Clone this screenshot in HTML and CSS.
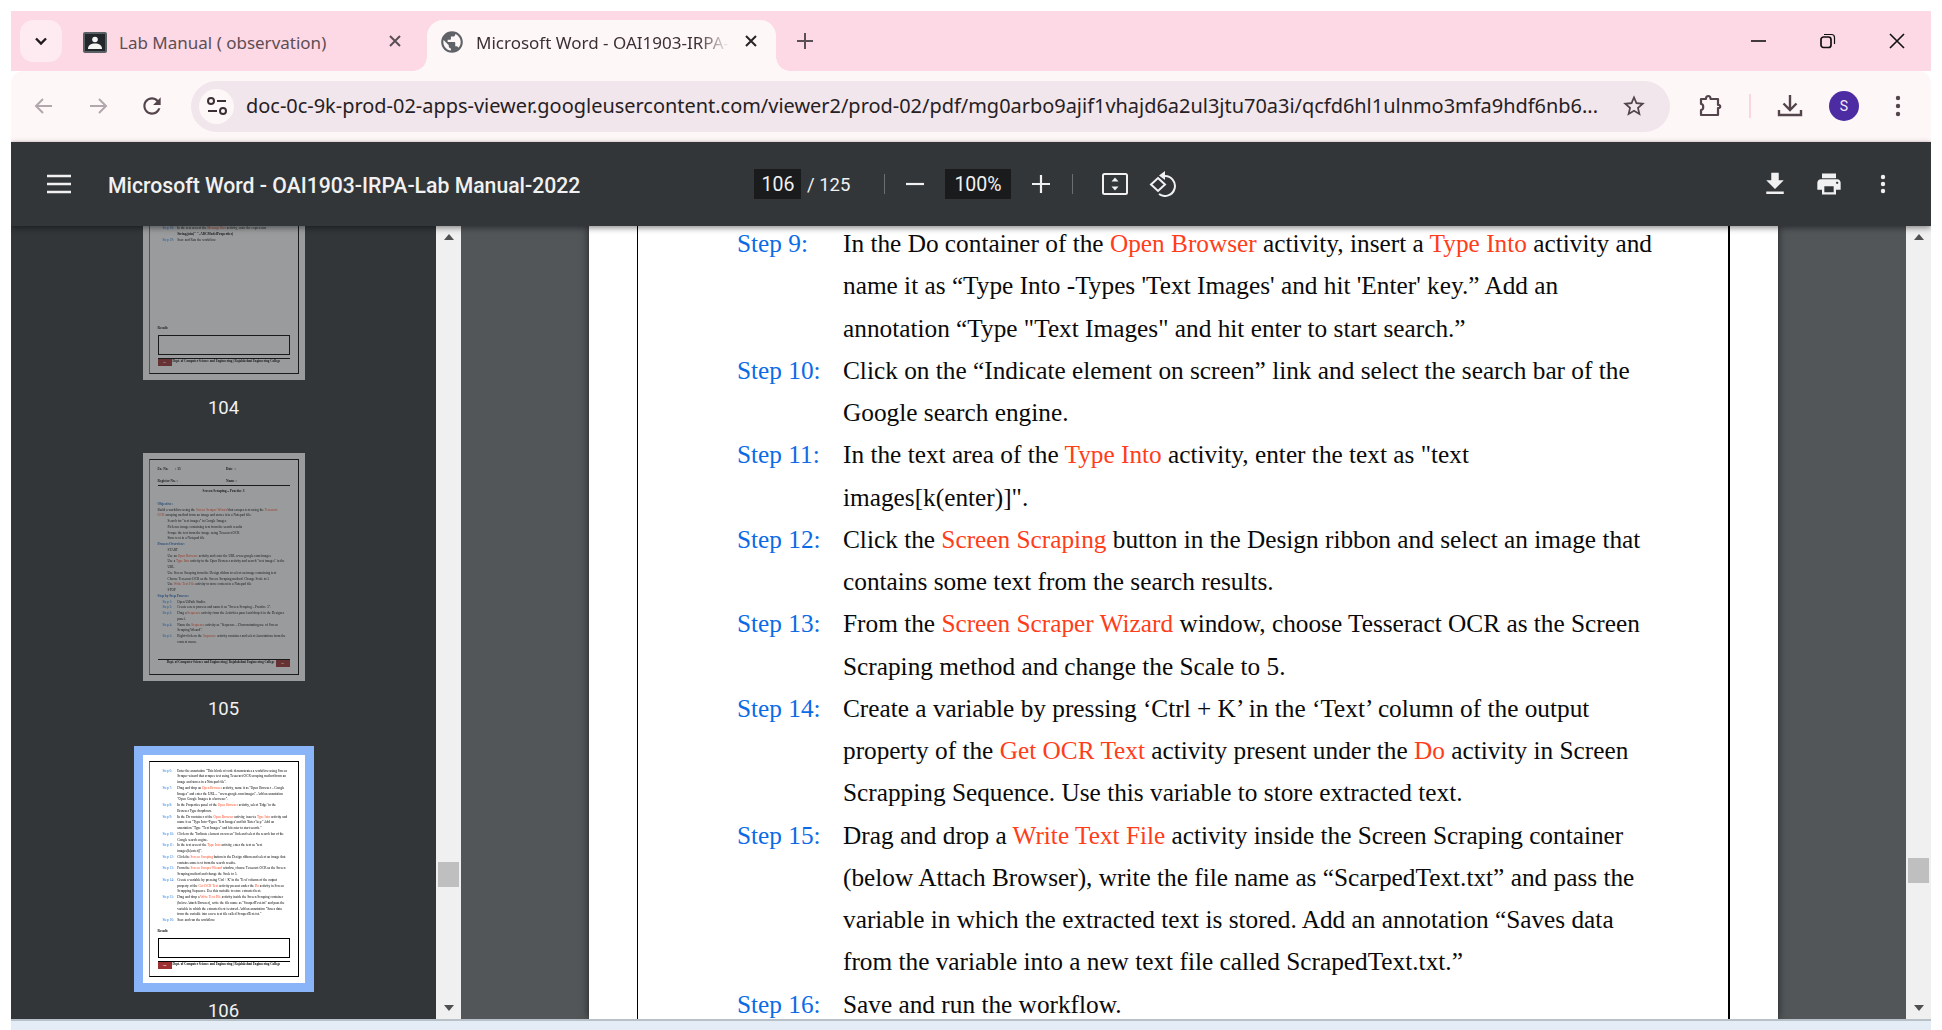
FILE: index.html
```html
<!DOCTYPE html>
<html lang="en">
<head>
<meta charset="utf-8">
<title>Microsoft Word - OAI1903-IRPA-Lab Manual-2022</title>
<link rel="stylesheet" href="styles.css">
</head>
<body>
<div class="window">
  <div class="tabstrip">
    <div class="tabmenu"><svg width="16" height="16" viewBox="0 0 16 16"><path d="M3 5.5l5 5 5-5" fill="none" stroke="#1f1a1d" stroke-width="2.4"/></svg></div>
    <div class="tab">
      <svg class="tabicon" width="24" height="21" viewBox="0 0 24 21"><rect width="24" height="21" rx="2" fill="#5a5f64"/><rect x="2" y="2" width="20" height="17" fill="#23262a"/><circle cx="12" cy="7.5" r="2.8" fill="#f5f5f5"/><path d="M5 17c0-4 3-5.500 7-5.500s7 1.500 7 5.500z" fill="#f5f5f5"/></svg>
      <span class="tabtitle">Lab Manual ( observation)</span>
      <svg class="tabclose dim" width="16" height="16" viewBox="0 0 16 16"><path d="M3 3l10 10M13 3L3 13" stroke="#5a4f55" stroke-width="2"/></svg>
    </div>
    <div class="tab active">
      <svg class="globe" width="26" height="26" viewBox="0 0 24 24"><path fill="#5f6368" d="M12 2C6.480 2 2 6.480 2 12s4.480 10 10 10 10-4.480 10-10S17.520 2 12 2zm-1 17.930c-3.950-.49-7-3.850-7-7.930 0-.62.08-1.210.21-1.790L9 15v1c0 1.100.9 2 2 2v1.930zm6.900-2.540c-.26-.81-1-1.390-1.900-1.390h-1v-3c0-.55-.45-1-1-1H8v-2h2c.55 0 1-.45 1-1V7h2c1.100 0 2-.9 2-2v-.41c2.930 1.190 5 4.060 5 7.410 0 2.080-.8 3.970-2.100 5.390z"/></svg>
      <span class="tabtitle fade">Microsoft Word - OAI1903-IRPA-Lab Manual-2022</span>
      <svg class="tabclose" width="16" height="16" viewBox="0 0 16 16"><path d="M3 3l10 10M13 3L3 13" stroke="#2a2327" stroke-width="2"/></svg>
    </div>
    <svg class="newtab" width="18" height="18" viewBox="0 0 18 18"><path d="M9 1v16M1 9h16" stroke="#5a4f55" stroke-width="2"/></svg>
    <div class="winctl">
      <div class="winbtn"><svg width="16" height="16" viewBox="0 0 16 16"><path d="M0 8h15" stroke="#111" stroke-width="1.600"/></svg></div>
      <div class="winbtn"><svg width="16" height="16" viewBox="0 0 16 16"><rect x="1" y="4" width="10" height="10.500" rx="2.500" fill="none" stroke="#111" stroke-width="1.700"/><path d="M4 1.500h7.500a3 3 0 0 1 3 3V11" fill="none" stroke="#111" stroke-width="1.200"/></svg></div>
      <div class="winbtn"><svg width="16" height="16" viewBox="0 0 16 16"><path d="M1 1l14 14M15 1L1 15" stroke="#111" stroke-width="1.600"/></svg></div>
    </div>
  </div>

  <div class="toolbar">
    <div class="slot"><svg width="22" height="22" viewBox="0 0 22 22"><path d="M19 11H3M10 4l-7 7 7 7" fill="none" stroke="#b0a8ac" stroke-width="2"/></svg></div>
    <div class="slot"><svg width="22" height="22" viewBox="0 0 22 22"><path d="M3 11h16M12 4l7 7-7 7" fill="none" stroke="#b0a8ac" stroke-width="2"/></svg></div>
    <div class="slot"><svg width="26" height="26" viewBox="0 0 24 24"><path fill="#54444c" d="M17.650 6.350C16.200 4.900 14.210 4 12 4c-4.420 0-7.990 3.580-7.990 8s3.570 8 7.990 8c3.730 0 6.840-2.550 7.730-6h-2.080c-.82 2.330-3.040 4-5.650 4-3.310 0-6-2.690-6-6s2.690-6 6-6c1.660 0 3.140.69 4.220 1.780L13 11h7V4l-2.350 2.350z"/></svg></div>
    <div class="address">
      <div class="tune"><svg width="22" height="22" viewBox="0 0 22 22"><circle cx="5" cy="6" r="3" fill="none" stroke="#3c3034" stroke-width="2"/><path d="M11 6h9M2 16h9" stroke="#3c3034" stroke-width="2"/><circle cx="17" cy="16" r="3" fill="none" stroke="#3c3034" stroke-width="2"/></svg></div>
      <span class="url">doc-0c-9k-prod-02-apps-viewer.googleusercontent.com/viewer2/prod-02/pdf/mg0arbo9ajif1vhajd6a2ul3jtu70a3i/qcfd6hl1ulnmo3mfa9hdf6nb6...</span>
      <svg class="star" width="26" height="26" viewBox="0 0 24 24"><path fill="#54444c" d="M22 9.240l-7.190-.62L12 2 9.190 8.630 2 9.240l5.460 4.730L5.820 21 12 17.270 18.180 21l-1.630-7.030L22 9.240zM12 15.400l-3.760 2.270 1-4.280-3.320-2.880 4.380-.38L12 6.100l1.710 4.040 4.380.38-3.320 2.880 1 4.280L12 15.400z"/></svg>
    </div>
    <div class="slot ext"><svg width="26" height="26" viewBox="0 0 26 26"><path d="M4 6h5c-.5-4 5-4 4.500 0H21v6c3-.5 3 3.500 0 3v7H4v-5c3 0 3-6 0-6z" fill="none" stroke="#54444c" stroke-width="2.200" stroke-linejoin="round"/></svg></div>
    <div class="tsep"></div>
    <div class="slot"><svg width="26" height="26" viewBox="0 0 26 26"><path d="M13 2v15M6.500 10.500L13 17l6.500-6.500M2 17v5h22v-5" fill="none" stroke="#54444c" stroke-width="2.400"/></svg></div>
    <div class="slot"><div class="avatar">S</div></div>
    <div class="slot"><svg width="8" height="24" viewBox="0 0 8 24"><circle cx="4" cy="4" r="2.200" fill="#54444c"/><circle cx="4" cy="12" r="2.200" fill="#54444c"/><circle cx="4" cy="20" r="2.200" fill="#54444c"/></svg></div>
  </div>

  <div class="viewerbar">
    <svg class="burger" width="24" height="20" viewBox="0 0 24 20"><path d="M0 2h24M0 10h24M0 18h24" stroke="#f1f1f1" stroke-width="2.600"/></svg>
    <div class="doctitle">Microsoft Word - OAI1903-IRPA-Lab Manual-2022</div>
    <div class="pgbox">106</div>
    <div class="pgtotal">/ 125</div>
    <div class="vsep"></div>
    <div class="vslot sp-minus"><svg width="18" height="18" viewBox="0 0 18 18"><path d="M0 9h18" stroke="#f1f1f1" stroke-width="2.200"/></svg></div>
    <div class="zoombox">100%</div>
    <div class="vslot sp-plus"><svg width="18" height="18" viewBox="0 0 18 18"><path d="M0 9h18M9 0v18" stroke="#f1f1f1" stroke-width="2.200"/></svg></div>
    <div class="vsep sp-sep2"></div>
    <svg class="fit" width="26" height="22" viewBox="0 0 26 22"><rect x="1" y="1" width="24" height="20" rx="1.500" fill="none" stroke="#f1f1f1" stroke-width="2"/><path d="M13 4.500l3.500 4h-7zM13 17.500l3.500-4h-7z" fill="#f1f1f1"/></svg>
    <svg class="rotate" width="28" height="26" viewBox="0 0 28 26"><path d="M9 7l7 6.500-7 6.500-7-6.500z" fill="none" stroke="#f1f1f1" stroke-width="2"/><path d="M12 5h3a10 10 0 1 1-5 18" fill="none" stroke="#f1f1f1" stroke-width="2"/><path d="M16 0v9l-6-4.500z" fill="#f1f1f1"/></svg>
    <div class="vright">
      <div class="vslot2"><svg width="30" height="30" viewBox="0 0 24 24"><path fill="#f1f1f1" d="M19 9h-4V3H9v6H5l7 7 7-7zM5 18v2h14v-2H5z"/></svg></div>
      <div class="vslot2"><svg width="28" height="28" viewBox="0 0 24 24"><path fill="#f1f1f1" d="M19 8H5c-1.660 0-3 1.340-3 3v6h4v4h12v-4h4v-6c0-1.660-1.340-3-3-3zm-3 11H8v-5h8v5zm3-7c-.55 0-1-.45-1-1s.45-1 1-1 1 .45 1 1-.45 1-1 1zm-1-9H6v4h12V3z"/></svg></div>
      <div class="vslot2"><svg width="8" height="22" viewBox="0 0 8 22"><circle cx="4" cy="4" r="2.200" fill="#f1f1f1"/><circle cx="4" cy="11" r="2.200" fill="#f1f1f1"/><circle cx="4" cy="18" r="2.200" fill="#f1f1f1"/></svg></div>
    </div>
  </div>

  <div class="content">
    <aside class="sidebar">
      <div class="thumb dimmed">
        <div class="frame">
          <div class="skip"></div>
          <div class="tl"><span class="tn">Step 18:</span>In the text area of the <i class="tr">Message Box</i> activity, enter the expression</div>
          <div class="tl tc"><b>String.join(" ", ABCModelProperties)</b></div>
          <div class="tl"><span class="tn">Step 19:</span>Save and Run the workflow.</div>
          <div class="bottom">
            <div class="tl tb">Result:</div>
            <div class="resultbox"></div>
            <div class="foot"><span class="redbox">104</span><span class="foottext">Dept. of Computer Science and Engineering | Rajalakshmi Engineering College</span></div>
          </div>
        </div>
      </div>
      <div class="plabel">104</div>
      <div class="thumb dimmed">
        <div class="frame">
          <div class="tl tb top"><span class="col">Ex. No.&nbsp;&nbsp;&nbsp;&nbsp;&nbsp;&nbsp;&nbsp;&nbsp;: 15</span>Date&nbsp;&nbsp;:</div>
          <div class="tl"></div>
          <div class="tl tb rule"><span class="col">Register No. :</span>Name :</div>
          <div class="tl tb center">Screen Scraping – Practice 3</div>
          <div class="tl gap"></div>
          <div class="tl tb th">Objective:</div>
          <div class="tl">Build a workflow using the <i class="tr">Screen Scraper Wizard</i> that scrapes text using the <i class="tr">Tesseract</i></div>
          <div class="tl"><i class="tr">OCR</i> scraping method from an image and stores it in a Notepad file:</div>
          <div class="tl bl">Search for "text images" in Google Images</div>
          <div class="tl bl">Pick one image containing text from the search results</div>
          <div class="tl bl">Scrape the text from the image using Tesseract OCR</div>
          <div class="tl bl">Store text in a Notepad file</div>
          <div class="tl tb th">Process Overview:</div>
          <div class="tl bl">START</div>
          <div class="tl bl">Use an <i class="tr">Open Browser</i> activity and enter the URL www.google.com/images</div>
          <div class="tl bl">Use a <i class="tr">Type Into</i> activity in the Open Browser activity and search "text images" in the</div>
          <div class="tl bl">URL</div>
          <div class="tl bl">Use Screen Scraping from the Design ribbon to select an image containing text</div>
          <div class="tl bl">Choose Tesseract OCR as the Screen Scraping method. Change Scale to 5</div>
          <div class="tl bl">Use <i class="tr">Write Text File</i> activity to store content in a Notepad file</div>
          <div class="tl bl">STOP</div>
          <div class="tl tb th">Step by Step Process:</div>
          <div class="tl"><span class="tn">Step 1:</span>Open UiPath Studio.</div>
          <div class="tl"><span class="tn">Step 2:</span>Create a new process and name it as "Screen Scraping – Practice 3".</div>
          <div class="tl"><span class="tn">Step 3:</span>Drag a <i class="tr">Sequence</i> activity from the Activities panel and drop it in the Designer</div>
          <div class="tl tc">panel.</div>
          <div class="tl"><span class="tn">Step 4:</span>Name the <i class="tr">Sequence</i> activity as "Sequence – Demonstrating use of Screen</div>
          <div class="tl tc">Scraping Wizard".</div>
          <div class="tl"><span class="tn">Step 5:</span>Right-click on the <i class="tr">Sequence</i> activity container and select Annotations from the</div>
          <div class="tl tc">context menu.</div>
          <div class="bottom">
            <div class="foot rev"><span class="foottext">Dept. of Computer Science and Engineering | Rajalakshmi Engineering College</span><span class="redbox">105</span></div>
          </div>
        </div>
      </div>
      <div class="plabel">105</div>
      <div class="thumb selected">
        <div class="frame">
          <div class="tl top"><span class="tn">Step 6:</span>Enter the annotation "This block of code demonstrates a workflow using Screen</div>
          <div class="tl tc">Scraper wizard that scrapes text using Tesseract OCR scraping method from an</div>
          <div class="tl tc">image and stores in a Notepad file".</div>
          <div class="tl"><span class="tn">Step 7:</span>Drag and drop an <i class="tr">Open Browser</i> activity, name it as "Open Browser – Google</div>
          <div class="tl tc">Images" and enter the URL... "www.google.com/images". Add an annotation</div>
          <div class="tl tc">"Open Google Images in a browser".</div>
          <div class="tl"><span class="tn">Step 8:</span>In the Properties panel of the <i class="tr">Open Browser</i> activity, select 'Edge' in the</div>
          <div class="tl tc">Browser Type dropdown.</div>
          <div class="tl"><span class="tn">Step 9:</span>In the Do container of the <i class="tr">Open Browser</i> activity, insert a <i class="tr">Type Into</i> activity and</div>
          <div class="tl tc">name it as "Type Into -Types 'Text Images' and hit 'Enter' key." Add an</div>
          <div class="tl tc">annotation "Type "Text Images" and hit enter to start search."</div>
          <div class="tl"><span class="tn">Step 10:</span>Click on the "Indicate element on screen" link and select the search bar of the</div>
          <div class="tl tc">Google search engine.</div>
          <div class="tl"><span class="tn">Step 11:</span>In the text area of the <i class="tr">Type Into</i> activity, enter the text as "text</div>
          <div class="tl tc">images[k(enter)]".</div>
          <div class="tl"><span class="tn">Step 12:</span>Click the <i class="tr">Screen Scraping</i> button in the Design ribbon and select an image that</div>
          <div class="tl tc">contains some text from the search results.</div>
          <div class="tl"><span class="tn">Step 13:</span>From the <i class="tr">Screen Scraper Wizard</i> window, choose Tesseract OCR as the Screen</div>
          <div class="tl tc">Scraping method and change the Scale to 5.</div>
          <div class="tl"><span class="tn">Step 14:</span>Create a variable by pressing 'Ctrl + K' in the 'Text' column of the output</div>
          <div class="tl tc">property of the <i class="tr">Get OCR Text</i> activity present under the <i class="tr">Do</i> activity in Screen</div>
          <div class="tl tc">Scrapping Sequence. Use this variable to store extracted text.</div>
          <div class="tl"><span class="tn">Step 15:</span>Drag and drop a <i class="tr">Write Text File</i> activity inside the Screen Scraping container</div>
          <div class="tl tc">(below Attach Browser), write the file name as "ScarpedText.txt" and pass the</div>
          <div class="tl tc">variable in which the extracted text is stored. Add an annotation "Saves data</div>
          <div class="tl tc">from the variable into a new text file called ScrapedText.txt."</div>
          <div class="tl"><span class="tn">Step 16:</span>Save and run the workflow.</div>
          <div class="bottom">
            <div class="tl tb">Result:</div>
            <div class="resultbox"></div>
            <div class="foot"><span class="redbox">106</span><span class="foottext">Dept. of Computer Science and Engineering | Rajalakshmi Engineering College</span></div>
          </div>
        </div>
      </div>
      <div class="plabel">106</div>
    </aside>
    <div class="scrollbar">
      <div class="arrow up"></div>
      <div class="sthumb side"></div>
      <div class="arrow down"></div>
    </div>
    <main class="viewer">
      <div class="page">
        <div class="pageframe">
          <div class="step"><div class="label">Step 9:</div><div class="body">In the Do container of the <span class="r">Open Browser</span> activity, insert a <span class="r">Type Into</span> activity and<br>name it as “Type Into -Types 'Text Images' and hit 'Enter' key.” Add an<br>annotation “Type "Text Images" and hit enter to start search.”</div></div>
          <div class="step"><div class="label">Step 10:</div><div class="body">Click on the “Indicate element on screen” link and select the search bar of the<br>Google search engine.</div></div>
          <div class="step"><div class="label">Step 11:</div><div class="body">In the text area of the <span class="r">Type Into</span> activity, enter the text as "text<br>images[k(enter)]".</div></div>
          <div class="step"><div class="label">Step 12:</div><div class="body">Click the <span class="r">Screen Scraping</span> button in the Design ribbon and select an image that<br>contains some text from the search results.</div></div>
          <div class="step"><div class="label">Step 13:</div><div class="body">From the <span class="r">Screen Scraper Wizard</span> window, choose Tesseract OCR as the Screen<br>Scraping method and change the Scale to 5.</div></div>
          <div class="step"><div class="label">Step 14:</div><div class="body">Create a variable by pressing ‘Ctrl + K’ in the ‘Text’ column of the output<br>property of the <span class="r">Get OCR Text</span> activity present under the <span class="r">Do</span> activity in Screen<br>Scrapping Sequence. Use this variable to store extracted text.</div></div>
          <div class="step"><div class="label">Step 15:</div><div class="body">Drag and drop a <span class="r">Write Text File</span> activity inside the Screen Scraping container<br>(below Attach Browser), write the file name as “ScarpedText.txt” and pass the<br>variable in which the extracted text is stored. Add an annotation “Saves data<br>from the variable into a new text file called ScrapedText.txt.”</div></div>
          <div class="step"><div class="label">Step 16:</div><div class="body">Save and run the workflow.</div></div>
        </div>
      </div>
    </main>
    <div class="scrollbar">
      <div class="arrow up"></div>
      <div class="sthumb main"></div>
      <div class="arrow down"></div>
    </div>
  </div>
  <div class="taskstrip"></div>
</div>
</body>
</html>
```
FILE: styles.css
```css
* { box-sizing: border-box; }
html, body { margin: 0; height: 100%; overflow: hidden; background: #fff; }
body { padding: 11px 11px 0; }
.window { height: 1019px; display: flex; flex-direction: column; overflow: hidden; font-family: "Noto Sans", sans-serif; }

/* tab strip */
.tabstrip { height: 60px; flex: none; background: #fdd8e5; display: flex; align-items: flex-end; padding-left: 9px; }
.tabmenu { width: 42px; height: 42px; margin-bottom: 9px; border-radius: 13px; background: #feeaf1; display: flex; align-items: center; justify-content: center; }
.tab { height: 51px; padding-bottom: 7px; display: flex; align-items: center; flex: none; }
.tab:not(.active) { width: 359px; margin-left: 6px; padding-left: 15px; padding-right: 24px; }
.tab.active { width: 349px; padding-left: 12px; padding-right: 17px; background: #fef7f8; border-radius: 16px 16px 0 0; position: relative; }
.tab.active::before, .tab.active::after { content: ""; position: absolute; bottom: 0; width: 14px; height: 14px; background: radial-gradient(circle at var(--cx) 0, #fdd8e5 13.5px, #fef7f8 14px); }
.tab.active::before { left: -14px; --cx: 0; }
.tab.active::after { right: -14px; --cx: 100%; }
.tabicon { flex: none; }
.tabtitle { font-size: 17px; color: #5c4e54; margin-left: 12px; white-space: nowrap; }
.tab.active .tabtitle { color: #3c3034; margin-left: 11px; }
.tabtitle.fade { flex: 1; min-width: 0; overflow: hidden; -webkit-mask-image: linear-gradient(90deg, #000 88%, transparent 100%); mask-image: linear-gradient(90deg, #000 88%, transparent 100%); }
.globe { flex: none; }
.tabclose { flex: none; margin-left: auto; position: relative; top: -1px; }
.tab.active .tabclose { margin-left: 14px; }
.newtab { flex: none; margin: 0 0 21px 20px; }
.winctl { margin-left: auto; display: flex; align-self: stretch; }
.winbtn { width: 69px; display: flex; align-items: center; justify-content: center; height: 60px; }

/* toolbar */
.toolbar { height: 71px; flex: none; background: #fef7f8; border-bottom: 1px solid #fdeaee; border-radius: 12px 12px 0 0; display: flex; align-items: center; padding-left: 6px; }
.slot { width: 54px; flex: none; display: flex; align-items: center; justify-content: center; }
.slot.ext { margin-left: 13px; }
.address { width: 1479px; height: 51px; margin-left: 12px; flex: none; background: #f0e6ec; border-radius: 26px; display: flex; align-items: center; padding-left: 8px; }
.tune { width: 35px; height: 35px; border-radius: 50%; background: #fef7f8; flex: none; display: flex; align-items: center; justify-content: center; }
.url { margin: 0 0 2px 12px; font-size: 19.950px; color: #26201f; white-space: nowrap; width: 1360px; flex: none; }
.star { flex: none; margin-left: 15px; }
.tsep { width: 2px; margin: 0 12px; height: 24px; background: #fcd5e2; flex: none; }
.avatar { width: 30px; height: 30px; border-radius: 50%; background: #4c2ba3; color: #f4eefc; font: 14px/30px Roboto, sans-serif; text-align: center; }

/* viewer bar */
.viewerbar { height: 84px; flex: none; background: #323639; color: #f1f1f1; display: flex; align-items: center; padding-left: 36px; padding-right: 21px; position: relative; z-index: 2; box-shadow: 0 2px 6px rgba(0, 0, 0, .45); font-family: Roboto, sans-serif; }
.burger { flex: none; }
.doctitle { margin-left: 37px; width: 472px; flex: none; font-size: 21.200px; font-weight: 500; white-space: nowrap; padding-top: 2px; }
.pgbox, .zoombox { height: 30px; background: #191b1c; font-size: 19.500px; line-height: 31px; text-align: center; flex: none; }
.pgbox { width: 47px; margin-left: 174px; padding-left: 1px; }
.pgtotal { width: 50px; margin-left: 6px; font-size: 18.500px; flex: none; padding-top: 1px; }
.vsep { width: 1px; height: 20px; background: #6b6f72; margin-left: 27px; flex: none; }
.vslot { width: 40px; display: flex; justify-content: center; flex: none; }
.sp-minus { margin-left: 10px; }
.zoombox { width: 66px; margin-left: 10px; }
.sp-plus { margin-left: 10px; }
.sp-sep2 { margin-left: 11px; }
.fit { flex: none; margin-left: 29px; }
.rotate { flex: none; margin-left: 21px; }
.vright { margin-left: auto; display: flex; }
.vslot2 { width: 54px; display: flex; align-items: center; justify-content: center; }

/* content */
.content { flex: 1; min-height: 0; display: flex; overflow: hidden; }
.sidebar { width: 425px; flex: none; background: #323639; overflow: hidden; display: flex; flex-direction: column; align-items: center; }
.sidebar > :first-child { margin-top: -74px; }
.thumb { width: 162px; height: 228px; flex: none; background: #fff; padding: 6px; color: #000; font-family: "Liberation Serif", serif; }
.thumb.dimmed { opacity: .5; }
.thumb.selected { box-shadow: 0 0 0 9px #8ab4f8; }
.plabel { height: 73.250px; flex: none; line-height: 56px; font-size: 18.500px; color: #f1f1f1; font-family: Roboto, sans-serif; position: relative; }
.frame { height: 216px; border: 1px solid #000; border-left-color: #777; padding: 0 8px; display: flex; flex-direction: column; }
.skip { height: 67px; flex: none; }
.tl { height: 5.750px; line-height: 5.750px; font-size: 3.440px; white-space: nowrap; flex: none; filter: blur(.2px); }
.tl.top { margin-top: 7px; }
.tl.gap { margin-bottom: 1.500px; }
.tb { font-weight: 700; }
.th { color: #1a62b8; }
.tn { display: inline-block; width: 14.700px; margin-left: 5px; color: #1f7ae0; }
.tc { padding-left: 19.700px; }
.bl { padding-left: 10px; }
.tr { font-style: normal; color: #ff4a22; }
.col { display: inline-block; width: 68.500px; }
.rule { border-bottom: 1px solid #000; height: 7px; margin-bottom: 3px; }
.center { text-align: center; }
.bottom { margin-top: auto; padding-bottom: 7px; }
.resultbox { height: 20px; border: 1px solid #000; margin-top: 3px; }
.foot { display: flex; height: 8px; border-top: 1px solid #000; margin-top: 3px; font-size: 3.200px; font-weight: 700; white-space: nowrap; }
.foot.rev { justify-content: flex-end; }
.redbox { width: 14px; height: 7px; background: #9c3030; color: #fff; text-align: center; line-height: 7px; font-size: 2.400px; flex: none; }
.foottext { margin: 0 1px; line-height: 5px; filter: blur(.15px); }

.scrollbar { width: 25px; flex: none; background: #f0f0f0; display: flex; flex-direction: column; align-items: center; }
.arrow { width: 0; height: 0; border-left: 5.500px solid transparent; border-right: 5.500px solid transparent; }
.arrow.up { border-bottom: 6px solid #505050; margin-top: 8px; }
.arrow.down { border-top: 6px solid #505050; margin-top: auto; margin-bottom: 8px; }
.sthumb { width: 21px; height: 25px; background: #bfbfbf; }
.sthumb.side { margin-top: 622px; }
.sthumb.main { margin-top: 618px; }

.viewer { flex: 1; min-width: 0; background: #525659; overflow: hidden; padding-left: 128px; }
.page { width: 1189px; height: 100%; background: #fff; box-shadow: 0 0 8px rgba(0, 0, 0, .6); padding: 0 48px; }
.pageframe { height: 100%; border-left: 1px solid #000; border-right: 2px solid #000; padding-left: 99px; font-family: "Liberation Serif", serif; font-size: 25.300px; line-height: 42.250px; color: #0a0a0a; overflow: hidden; }
.pageframe > :first-child { margin-top: -4px; }
.step { display: flex; white-space: nowrap; }
.label { width: 106px; flex: none; color: #0b6be6; }
.r { color: #ff3d1a; }
.taskstrip { height: 11px; flex: none; background: #e4edf6; border-top: 2px solid #b8c0c8; }
```
